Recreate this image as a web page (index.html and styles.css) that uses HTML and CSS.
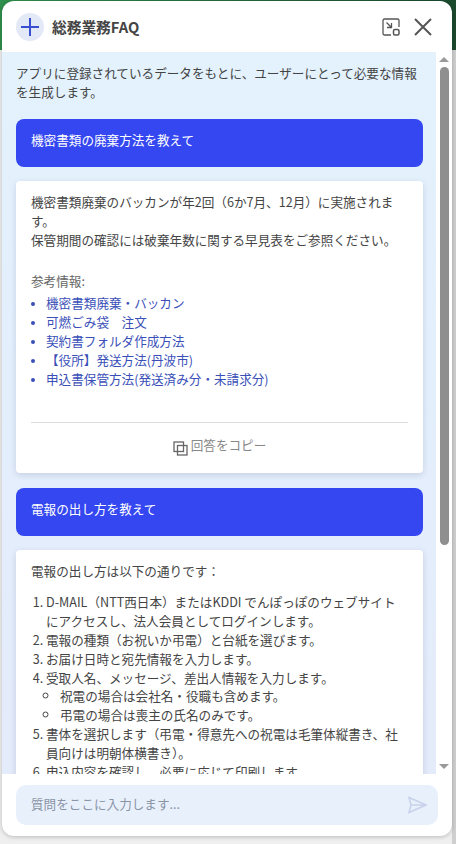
FILE: index.html
```html
<!DOCTYPE html>
<html lang="ja">
<head>
<meta charset="utf-8">
<title>総務業務FAQ</title>
<link rel="stylesheet" href="styles.css">
</head>
<body>
<div class="backdrop-top"></div>
<main class="widget">
  <header class="head">
    <span class="logo"><svg width="18" height="18" viewBox="0 0 18 18"><path d="M9 0v18M0 9h18" stroke="#3a4fd0" stroke-width="2" fill="none"/></svg></span>
    <h1 class="title">総務業務FAQ</h1>
    <button class="icon-btn pip"><svg width="18" height="18" viewBox="0 0 18 18" fill="none" stroke="#555" stroke-width="1.3"><path d="M9 17H2.500A1.500 1.500 0 0 1 1 15.500v-13A1.500 1.500 0 0 1 2.500 1h13A1.500 1.500 0 0 1 17 2.500V9"/><path d="M4.500 4.500l5 5M9.500 5v4.500H5"/><rect x="11.500" y="11.500" width="5.500" height="5.500" rx="1.500" stroke-width="1.500"/></svg></button>
    <button class="icon-btn close"><svg width="18" height="18" viewBox="0 0 18 18" fill="none" stroke="#555" stroke-width="2"><path d="M1 1l16 16M17 1L1 17"/></svg></button>
  </header>
  <div class="body">
    <div class="scroll">
      <p class="intro">アプリに登録されているデータをもとに、ユーザーにとって必要な情報を生成します。</p>
      <div class="q">機密書類の廃棄方法を教えて</div>
      <article class="a">
        <p>機密書類廃棄のバッカンが年2回（6か7月、12月）に実施されます。<br>保管期間の確認には破棄年数に関する早見表をご参照ください。</p>
        <p class="ref-label">参考情報:</p>
        <ul class="refs">
          <li>機密書類廃棄・バッカン</li>
          <li>可燃ごみ袋　注文</li>
          <li>契約書フォルダ作成方法</li>
          <li>【役所】発送方法(丹波市)</li>
          <li>申込書保管方法(発送済み分・未請求分)</li>
        </ul>
        <div class="copy"><svg class="copy-icon" width="15" height="15" viewBox="0 0 15 15" fill="none" stroke="#666" stroke-width="1.300"><rect x="1" y="1" width="9.500" height="9.500"/><rect x="4.500" y="4.500" width="9.500" height="9.500"/></svg><span>回答をコピー</span></div>
      </article>
      <div class="q">電報の出し方を教えて</div>
      <article class="a second">
        <p>電報の出し方は以下の通りです：</p>
        <ol class="steps">
          <li>D-MAIL（NTT西日本）またはKDDI でんぽっぽのウェブサイトにアクセスし、法人会員としてログインします。</li>
          <li>電報の種類（お祝いか弔電）と台紙を選びます。</li>
          <li>お届け日時と宛先情報を入力します。</li>
          <li>受取人名、メッセージ、差出人情報を入力します。
            <ul><li>祝電の場合は会社名・役職も含めます。</li><li>弔電の場合は喪主の氏名のみです。</li></ul>
          </li>
          <li>書体を選択します（弔電・得意先への祝電は毛筆体縦書き、社員向けは明朝体横書き）。</li>
          <li>申込内容を確認し、必要に応じて印刷します。</li>
        </ol>
      </article>
    </div>
    <div class="scrollbar">
      <span class="arrow up"></span>
      <span class="track"><span class="thumb"></span></span>
      <span class="arrow down"></span>
    </div>
  </div>
  <footer class="foot">
    <div class="input">
      <span class="placeholder">質問をここに入力します...</span>
      <svg width="19" height="18" viewBox="0 0 19 18" fill="none" stroke="#c8d2ea" stroke-width="1.600"><path d="M1 1.500L18 9 1 16.500 3 9zM3 9h15"/></svg>
    </div>
  </footer>
</main>
</body>
</html>
```
FILE: styles.css
```css
* { box-sizing: border-box; }
html, body { margin: 0; height: 100%; }
body {
  background: linear-gradient(90deg, #efeff0 452px, #cfcfcf 452px);
  overflow: hidden;
  padding: 1px 4px 8px 2px;
  font-family: "Noto Sans CJK JP", "Noto Sans", sans-serif;
  color: #444;
}
.backdrop-top {
  position: absolute;
  top: 0; left: 0; right: 0;
  height: 50px;
  background: linear-gradient(90deg, #2f8f4c, #1b4a2e);
}
.widget {
  position: relative;
  height: 100%;
  display: flex;
  flex-direction: column;
  background: #fff;
  border-radius: 12px;
  box-shadow: 0 1px 4px rgba(0,0,0,.22);
  overflow: hidden;
}
.head {
  height: 51px;
  flex: none;
  display: flex;
  align-items: center;
  padding: 0 20px 0 14px;
}
.logo {
  width: 28px; height: 28px;
  border-radius: 50%;
  background: #e4e9f8;
  display: flex; align-items: center; justify-content: center;
}
.title { margin: 0 0 0 8px; font-size: 14.7px; font-weight: 700; color: #444; flex: 1; }
.icon-btn { border: 0; background: none; padding: 0; display: flex; }
.pip { margin-right: 14px; }
.body { flex: 1; min-height: 0; display: flex; }
.scroll {
  flex: 1;
  min-width: 0;
  overflow: hidden;
  padding: 12px 13px 0 14px;
  background: linear-gradient(#e3f2fd, #e4ebfb);
  font-size: 12.6px;
  line-height: 18.9px;
}
.scroll p { margin: 0; }
.intro { margin-bottom: 17px !important; }
.q {
  height: 48px;
  background: #3447f0;
  color: #fff;
  border-radius: 8px;
  padding: 12px 15px;
  margin-bottom: 14px;
}
.a {
  background: #fff;
  border-radius: 4px;
  box-shadow: 0 2px 6px rgba(60,70,110,.18);
  padding: 12px 15px 0;
  margin-bottom: 15px;
}
.ref-label { margin-top: 22px !important; color: #666; }
.refs { margin: 4px 0 0; padding: 0 0 0 15px; color: #3a4fb8; list-style: disc; }
.refs li::marker { font-size: 10px; }
.copy {
  margin-top: 33px;
  border-top: 1px solid #ddd;
  height: 51px;
  padding-bottom: 6px;
  display: flex; align-items: center; justify-content: center;
  gap: 3px;
  color: #888;
}
.copy-icon { margin-top: 8px; }
.second { padding-bottom: 40px; }
.steps { margin: 12px 0 0; padding: 0 0 0 15px; }
.steps ul { margin: 0; padding: 0 0 0 14px; list-style: circle; }
.scrollbar {
  width: 16px; flex: none;
  display: flex; flex-direction: column; align-items: center;
  padding: 5px 0;
}
.arrow { width: 0; height: 0; border-left: 5px solid transparent; border-right: 5px solid transparent; flex: none; }
.up { border-bottom: 5px solid #999; }
.down { border-top: 5px solid #999; }
.track { flex: 1; width: 100%; display: flex; justify-content: center; padding: 5px 0; }
.thumb { width: 9px; height: 478px; background: #8f8f8f; border-radius: 5px; }
.foot { flex: none; height: 62px; padding: 11px 14px 0; }
.input {
  height: 40px;
  border-radius: 10px;
  background: #e8f0fc;
  display: flex; align-items: center; justify-content: space-between;
  padding: 0 11px 0 15px;
  font-size: 12.6px;
  color: #8a94a6;
}
.placeholder { padding-bottom: 4px; }
```
